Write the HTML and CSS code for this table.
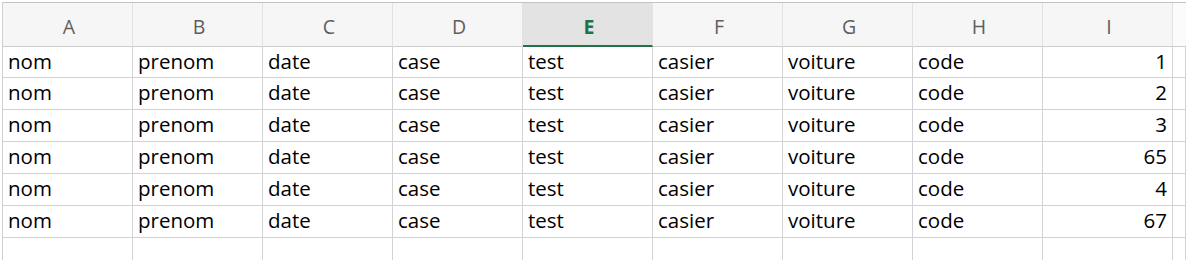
FILE: index.html
```html
<!DOCTYPE html>
<html>
<head>
<meta charset="utf-8">
<link rel="stylesheet" href="styles.css">
</head>
<body>
<div class="sheet">
  <div class="hd">A</div><div class="hd">B</div><div class="hd">C</div><div class="hd">D</div><div class="hd sel">E</div><div class="hd">F</div><div class="hd">G</div><div class="hd">H</div><div class="hd">I</div><div class="hd rest"></div>

  <div class="c">nom</div><div class="c">prenom</div><div class="c">date</div><div class="c">case</div><div class="c">test</div><div class="c">casier</div><div class="c">voiture</div><div class="c">code</div><div class="c num">1</div><div class="c"></div>
  <div class="c">nom</div><div class="c">prenom</div><div class="c">date</div><div class="c">case</div><div class="c">test</div><div class="c">casier</div><div class="c">voiture</div><div class="c">code</div><div class="c num">2</div><div class="c"></div>
  <div class="c">nom</div><div class="c">prenom</div><div class="c">date</div><div class="c">case</div><div class="c">test</div><div class="c">casier</div><div class="c">voiture</div><div class="c">code</div><div class="c num">3</div><div class="c"></div>
  <div class="c">nom</div><div class="c">prenom</div><div class="c">date</div><div class="c">case</div><div class="c">test</div><div class="c">casier</div><div class="c">voiture</div><div class="c">code</div><div class="c num">65</div><div class="c"></div>
  <div class="c">nom</div><div class="c">prenom</div><div class="c">date</div><div class="c">case</div><div class="c">test</div><div class="c">casier</div><div class="c">voiture</div><div class="c">code</div><div class="c num">4</div><div class="c"></div>
  <div class="c">nom</div><div class="c">prenom</div><div class="c">date</div><div class="c">case</div><div class="c">test</div><div class="c">casier</div><div class="c">voiture</div><div class="c">code</div><div class="c num">67</div><div class="c"></div>
  <div class="c"></div><div class="c"></div><div class="c"></div><div class="c"></div><div class="c"></div><div class="c"></div><div class="c"></div><div class="c"></div><div class="c"></div><div class="c"></div>
</div>
</body>
</html>
```

FILE: styles.css
```css
html, body {
  margin: 0;
  padding: 0;
  background: #ffffff;
  overflow: hidden;
}

.sheet {
  margin: 2px 0 0 2px;
  display: grid;
  grid-template-columns: repeat(9, 130px) 1fr;
  grid-template-rows: 44px 31px repeat(5, 32px) 32px;
  border-top: 1px solid #c4c4c4;
  border-left: 1px solid #d0d0d0;
  font-family: "Open Sans", "Liberation Sans", sans-serif;
}

.hd {
  box-sizing: border-box;
  background: #f6f6f6;
  border-right: 1px solid #e2e2e2;
  border-bottom: 1px solid #cccccc;
  color: #5e5e5e;
  font-size: 19.5px;
  display: flex;
  align-items: center;
  justify-content: center;
  padding: 4px 0 0 3px;
}

.hd.sel {
  background: #e3e3e3;
  color: #217346;
  font-weight: 700;
  border-bottom: 2px solid #217346;
  padding-top: 5px;
}

.hd.rest {
  background: #fbfbfb;
  border-right: none;
}

.c {
  box-sizing: border-box;
  border-right: 1px solid #d2d2d2;
  border-bottom: 1px solid #d2d2d2;
  font-size: 20.5px;
  color: #000;
  padding: 0 5px 3px 5px;
  display: flex;
  align-items: center;
  white-space: nowrap;
  overflow: hidden;
}

.c.num {
  justify-content: flex-end;
}
```
